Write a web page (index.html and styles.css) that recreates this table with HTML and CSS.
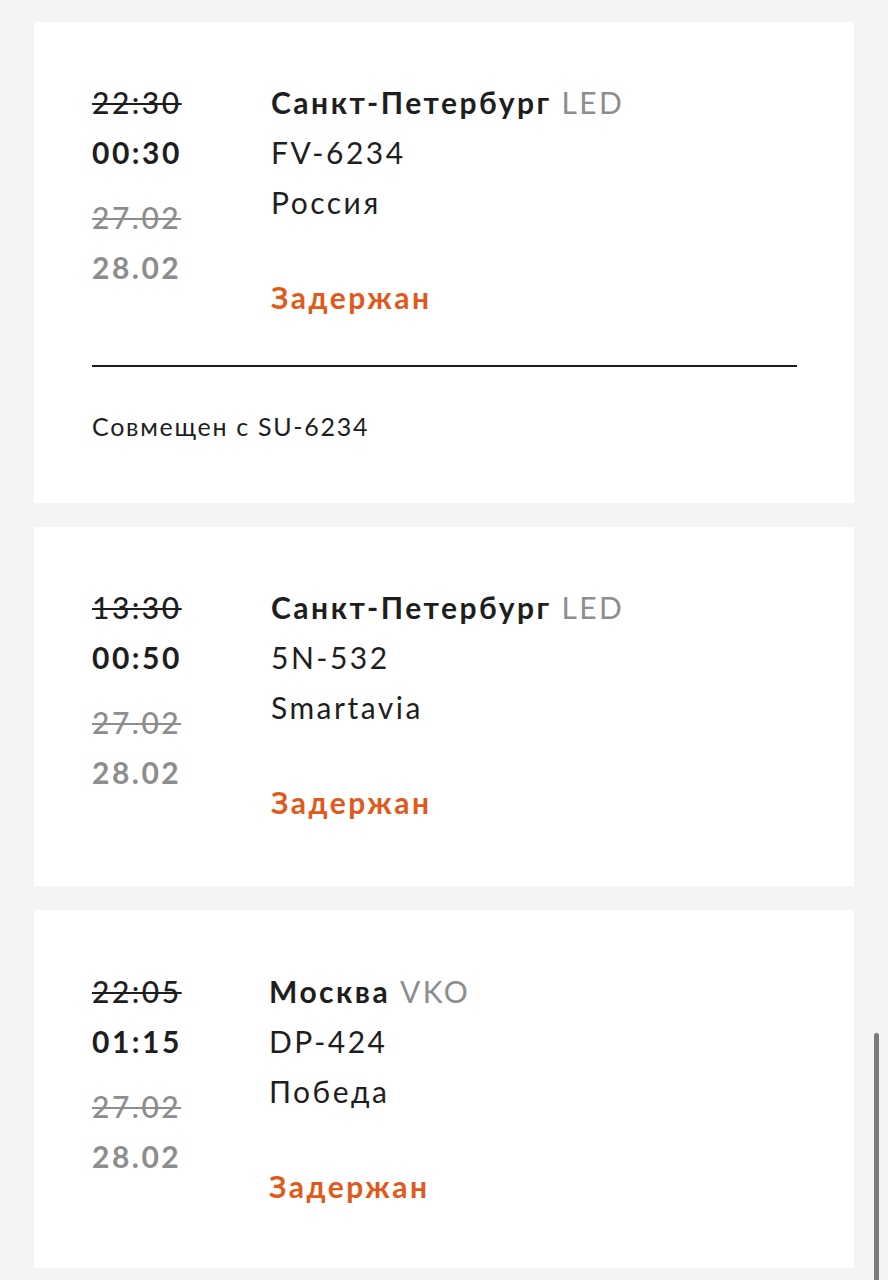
FILE: index.html
```html
<!DOCTYPE html>
<html lang="ru">
<head>
<meta charset="utf-8">
<title>Рейсы</title>
<link rel="stylesheet" href="styles.css">
</head>
<body>
<div class="list">
  <div class="card">
    <div class="flight">
      <div class="times">
        <div class="time-old">22:30</div>
        <div class="time-new">00:30</div>
        <div class="date-old">27.02</div>
        <div class="date-new">28.02</div>
      </div>
      <div class="info">
        <div class="city">Санкт-Петербург <span class="code">LED</span></div>
        <div class="line">FV-6234</div>
        <div class="line">Россия</div>
        <div class="status">Задержан</div>
      </div>
    </div>
    <div class="divider"></div>
    <div class="shared">Совмещен с SU-6234</div>
  </div>

  <div class="card">
    <div class="flight">
      <div class="times">
        <div class="time-old">13:30</div>
        <div class="time-new">00:50</div>
        <div class="date-old">27.02</div>
        <div class="date-new">28.02</div>
      </div>
      <div class="info">
        <div class="city">Санкт-Петербург <span class="code">LED</span></div>
        <div class="line">5N-532</div>
        <div class="line">Smartavia</div>
        <div class="status">Задержан</div>
      </div>
    </div>
  </div>

  <div class="card card-last">
    <div class="flight">
      <div class="times">
        <div class="time-old">22:05</div>
        <div class="time-new">01:15</div>
        <div class="date-old">27.02</div>
        <div class="date-new">28.02</div>
      </div>
      <div class="info info-shift">
        <div class="city">Москва <span class="code">VKO</span></div>
        <div class="line">DP-424</div>
        <div class="line">Победа</div>
        <div class="status">Задержан</div>
      </div>
    </div>
  </div>
</div>
<div class="scrollbar"></div>
</body>
</html>
```

FILE: styles.css
```css
html, body {
  margin: 0;
  padding: 0;
}
body {
  background: #f4f4f4;
  font-family: Lato, "Open Sans", "Noto Sans", sans-serif;
  color: #1e1e1e;
  height: 1280px;
  overflow: hidden;
}
.list {
  display: flex;
  flex-direction: column;
  gap: 24px;
  padding: 22px 34px 0 34px;
}
.card {
  background: #ffffff;
  padding: 55px 57px 59px 58px;
}
.card-last {
  padding-top: 56px;
  padding-bottom: 57px;
}
.flight {
  display: flex;
  font-size: 30px;
  line-height: 50px;
  letter-spacing: 2.5px;
}
.times {
  width: 179px;
  flex: none;
}
.time-old {
  font-weight: 500;
  text-decoration: line-through;
  text-decoration-thickness: 2px;
}
.time-new {
  font-weight: 700;
}
.date-old {
  margin-top: 15px;
  color: #8d8d8d;
  font-weight: 500;
  text-decoration: line-through;
  text-decoration-thickness: 2px;
}
.date-new {
  color: #8d8d8d;
  font-weight: 700;
}
.info {
  flex: 1;
}
.info-shift {
  margin-left: -2px;
}
.city {
  font-weight: 700;
}
.code {
  font-weight: 400;
  color: #8d8d8d;
}
.line {
  font-weight: 400;
}
.status {
  margin-top: 45px;
  font-weight: 700;
  color: #e05a1c;
}
.divider {
  height: 2px;
  background: #1e1e1e;
  margin: 43px 0 44px 0;
}
.shared {
  font-size: 25px;
  line-height: 30px;
  letter-spacing: 1.7px;
  padding-bottom: 3px;
}
.scrollbar {
  position: absolute;
  left: 874px;
  top: 1033px;
  width: 5px;
  height: 260px;
  border-radius: 3px;
  background: #7b7b7b;
}
```
